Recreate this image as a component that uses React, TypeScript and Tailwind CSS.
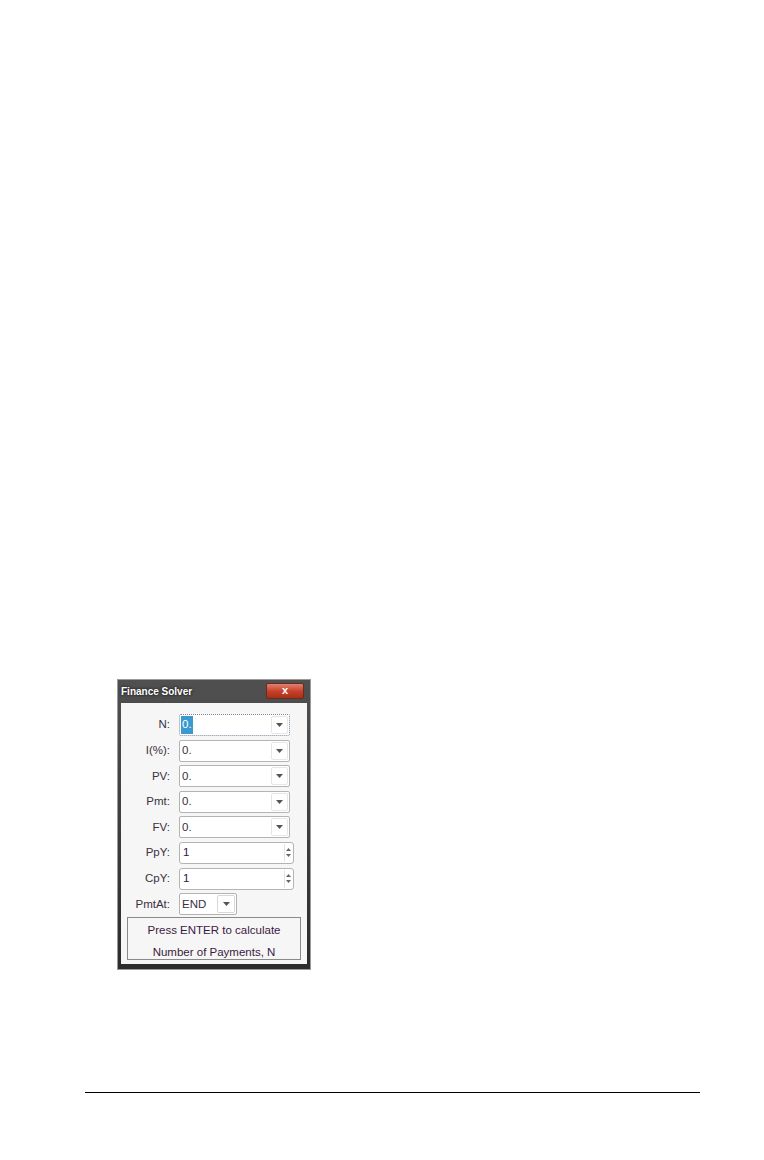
import React from "react";

const font = { fontFamily: '"Liberation Sans", Arial, sans-serif' };

function DropArrow() {
  return (
    <svg width="7" height="4" viewBox="0 0 7 4">
      <path d="M0 0 L7 0 L3.5 4 Z" fill="#555" />
    </svg>
  );
}

function DropInput({ value, focused }: { value: string; focused?: boolean }) {
  return (
    <div
      className={
        "flex h-[22px] w-[111px] items-center rounded-[2px] bg-white " +
        (focused ? "border border-dotted border-[#7a8a9a]" : "border border-[#b4b4b4]")
      }
    >
      <div className="flex flex-1 items-center pl-[1px] text-[11.5px] text-[#3a3040]">
        {focused ? (
          <span className="bg-[#3a9ad0] px-[1px] text-white">{value}</span>
        ) : (
          <span className="pl-[1px]">{value}</span>
        )}
      </div>
      <div className="mr-[1px] flex h-[18px] w-[17px] items-center justify-center rounded-[2px] border border-[#e6e6e6]">
        <DropArrow />
      </div>
    </div>
  );
}

function SpinInput({ value }: { value: string }) {
  return (
    <div className="flex h-[22px] w-[115px] items-center rounded-[3px] border border-[#b4b4b4] bg-white">
      <div className="flex-1 pl-[3px] text-[11.5px] text-[#2a2040]">{value}</div>
      <div className="mr-[1px] flex h-[18px] w-[8px] flex-col items-center justify-center gap-[3px] border-l border-[#e4e4e4]">
        <svg width="5" height="3" viewBox="0 0 5 3">
          <path d="M0 3 L5 3 L2.5 0 Z" fill="#666" />
        </svg>
        <svg width="5" height="3" viewBox="0 0 5 3">
          <path d="M0 0 L5 0 L2.5 3 Z" fill="#666" />
        </svg>
      </div>
    </div>
  );
}

function Row({ label, children }: { label: string; children: React.ReactNode }) {
  return (
    <div className="flex h-[22px] items-center">
      <div className="w-[49px] text-right text-[11.5px] text-[#3a3040]">{label}</div>
      <div className="ml-[9px]">{children}</div>
    </div>
  );
}

function FinanceSolver() {
  return (
    <div
      className="flex h-[291px] w-[194px] flex-col border border-[#9a9a9a] bg-gradient-to-b from-[#505050] to-[#2c2c2c]"
      style={font}
    >
      <div className="flex h-[23px] items-center justify-between pl-[3px] pr-[6px]">
        <span className="text-[10px] font-bold text-white [text-shadow:0_0_3px_#000]">Finance Solver</span>
        <div className="mt-[-2px] flex h-[16px] w-[38px] items-center justify-center rounded-[2px] border border-[#6a2a20] bg-gradient-to-b from-[#e08070] via-[#c8402a] to-[#a83018]">
          <span className="text-[11px] font-bold leading-none text-white">x</span>
        </div>
      </div>
      <div className="mx-[3px] mb-[5px] flex flex-1 flex-col bg-[#f6f6f6] pt-[11px]">
        <div className="flex flex-col gap-[3.6px]">
          <Row label="N:">
            <DropInput value="0." focused />
          </Row>
          <Row label="I(%):">
            <DropInput value="0." />
          </Row>
          <Row label="PV:">
            <DropInput value="0." />
          </Row>
          <Row label="Pmt:">
            <DropInput value="0." />
          </Row>
          <Row label="FV:">
            <DropInput value="0." />
          </Row>
          <Row label="PpY:">
            <SpinInput value="1" />
          </Row>
          <Row label="CpY:">
            <SpinInput value="1" />
          </Row>
          <Row label="PmtAt:">
            <div className="flex h-[22px] w-[58px] items-center rounded-[2px] border border-[#b4b4b4] bg-white">
              <div className="flex-1 pl-[2px] text-[11.5px] text-[#3a3040]">END</div>
              <div className="mr-[1px] flex h-[18px] w-[18px] items-center justify-center rounded-[2px] border border-[#d8d8d8]">
                <DropArrow />
              </div>
            </div>
          </Row>
        </div>
        <div className="mx-[6px] mt-[2px] flex h-[43px] flex-col items-center gap-[10.5px] border border-[#8a8a8a] pt-[7px] text-[11.5px] leading-none text-[#3a1a40]">
          <span>Press ENTER to calculate</span>
          <span>Number of Payments, N</span>
        </div>
      </div>
    </div>
  );
}

export default function App() {
  return (
    <div className="h-[1160px] w-[764px] bg-white pt-[679px]">
      <div className="pl-[117px]">
        <FinanceSolver />
      </div>
      <div className="ml-[85px] mt-[122px] h-[1px] w-[615px] bg-black" />
    </div>
  );
}
